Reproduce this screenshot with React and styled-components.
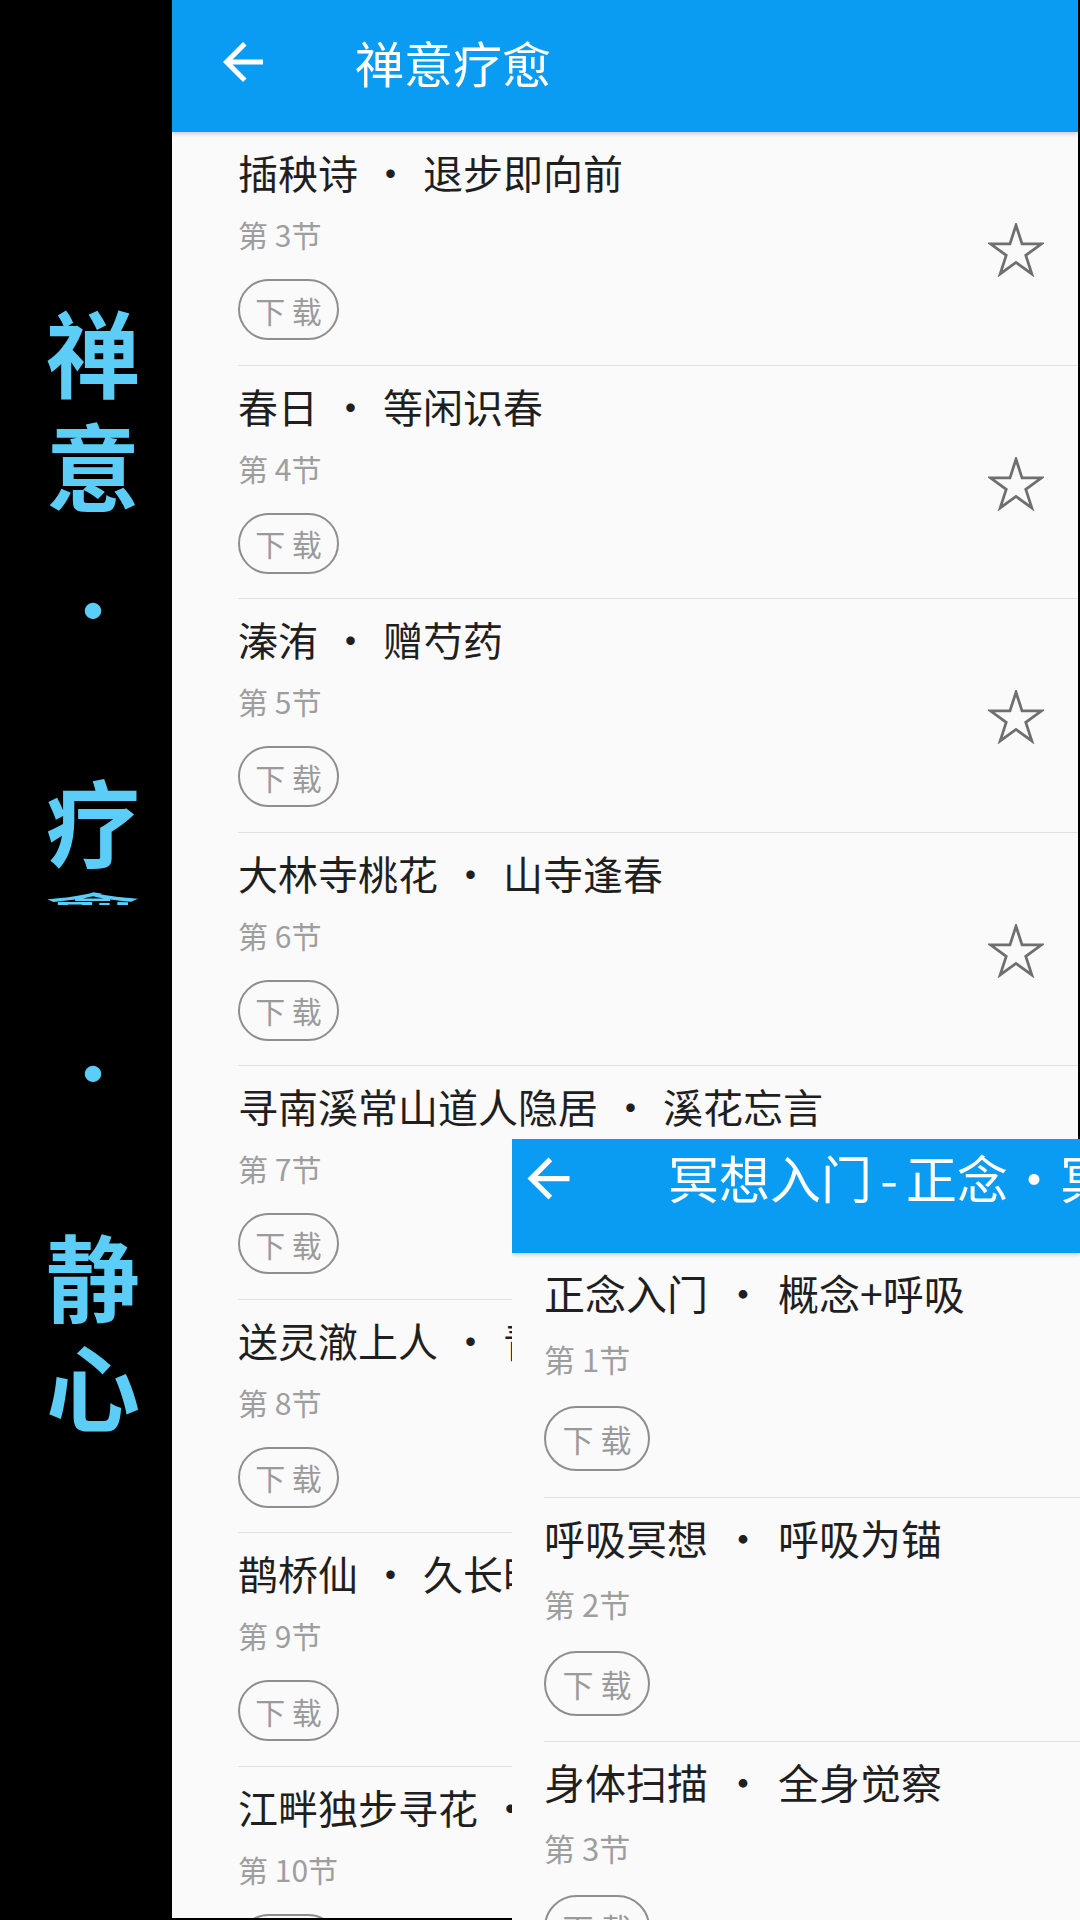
import React from 'react';
import styled, { createGlobalStyle } from 'styled-components';

const GlobalStyle = createGlobalStyle`
  html, body {
    margin: 0;
    padding: 0;
    background: #000;
  }
  body {
    font-family: 'Noto Sans CJK SC', 'Noto Sans', sans-serif;
  }
`;

const MAIN = {
  pad: 66,
  titleSize: 40,
  titleLH: 50,
  padTop: 15,
  subSize: 30,
  subLH: 40,
  subGap: 17,
  btnW: 101,
  btnH: 61,
  btnFont: 30,
  btnGap: 25,
  padBottom: 24.5,
  sep: 65,
};

const SIDE = {
  pad: 32,
  titleSize: 41,
  titleLH: 52,
  padTop: 13,
  subSize: 31,
  subLH: 42,
  subGap: 20,
  btnW: 106,
  btnH: 65,
  btnFont: 31,
  btnGap: 26,
  padBottom: 25.5,
  sep: 70,
};

const Screen = styled.div`
  position: relative;
  display: flex;
  width: 1080px;
  height: 1920px;
  background: #000;
  overflow: hidden;
`;

const Strip = styled.div`
  width: 172px;
  flex-shrink: 0;
  display: flex;
  flex-direction: column;
  align-items: center;
  padding: 292px 0 0 14px;
  box-sizing: border-box;
`;

const Glyph = styled.div`
  font-size: 94px;
  line-height: 116px;
  height: 116px;
  font-weight: 700;
  color: #5bcdf6;
  margin-top: ${(p) => p.$gap || 0}px;
`;

const Dot = styled.div`
  font-size: 64px;
  line-height: 116px;
  height: 116px;
  font-weight: 700;
  color: #5bcdf6;
  margin-top: ${(p) => p.$gap || 0}px;
`;

const Folding = styled.div`
  height: 13px;
  overflow: hidden;
  margin-top: 15px;
`;

const FoldingGlyph = styled.div`
  font-size: 94px;
  line-height: 94px;
  font-weight: 700;
  color: #5bcdf6;
  transform: scaleX(1.02) scaleY(0.34);
  transform-origin: top center;
  margin-top: -2px;
`;

const Panel = styled.div`
  width: 906px;
  height: 1918px;
  background: #fafafa;
  overflow: hidden;
  display: flex;
  flex-direction: column;
`;

const Overlay = styled.div`
  position: absolute;
  left: 512px;
  top: 1139px;
  right: 0;
  bottom: 0;
  background: #fafafa;
  overflow: hidden;
  display: flex;
  flex-direction: column;
`;

const Toolbar = styled.div`
  height: ${(p) => p.$h}px;
  flex-shrink: 0;
  background: #0a9cf3;
  display: flex;
  align-items: center;
  padding: 0 0 ${(p) => p.$pb}px ${(p) => p.$pl}px;
  box-sizing: border-box;
  box-shadow: 0 2px 4px rgba(0, 0, 0, 0.18);
  position: relative;
  z-index: 1;
  white-space: nowrap;
`;

const BackIcon = styled.svg`
  flex-shrink: 0;
  fill: #fff;
`;

const ToolbarTitle = styled.div`
  color: #fff;
  font-size: ${(p) => p.$size}px;
  font-weight: 400;
  margin-left: ${(p) => p.$ml}px;
  line-height: 1.2;
`;

const Spacer = styled.span`
  display: inline-block;
  width: ${(p) => p.$w}px;
  text-align: center;
`;

const List = styled.div`
  padding-left: ${(p) => p.$m.pad}px;
`;

const Row = styled.div`
  display: flex;
  align-items: center;
  border-bottom: 1px solid #e0e0e0;
`;

const Body = styled.div`
  flex: 1;
  display: flex;
  flex-direction: column;
  align-items: flex-start;
  padding: ${(p) => p.$m.padTop}px 0 ${(p) => p.$m.padBottom}px;
  white-space: nowrap;
`;

const Title = styled.div`
  font-size: ${(p) => p.$m.titleSize}px;
  line-height: ${(p) => p.$m.titleLH}px;
  color: #1f1f1f;
`;

const Sub = styled.div`
  font-size: ${(p) => p.$m.subSize}px;
  line-height: ${(p) => p.$m.subLH}px;
  margin-top: ${(p) => p.$m.subGap}px;
  color: #9e9e9e;
`;

const DownloadButton = styled.button`
  margin-top: ${(p) => p.$m.btnGap}px;
  width: ${(p) => p.$m.btnW}px;
  height: ${(p) => p.$m.btnH}px;
  border: 2px solid #8e8e8e;
  border-radius: ${(p) => p.$m.btnH / 2}px;
  background: transparent;
  color: #9a9a9a;
  font-family: inherit;
  font-size: ${(p) => p.$m.btnFont}px;
  padding: 0;
  display: flex;
  align-items: center;
  justify-content: center;
`;

const Star = styled.svg`
  flex-shrink: 0;
  margin: 4px 34px 0 0;
`;

const mainItems = [
  ['插秧诗', '退步即向前', 3],
  ['春日', '等闲识春', 4],
  ['溱洧', '赠芍药', 5],
  ['大林寺桃花', '山寺逢春', 6],
  ['寻南溪常山道人隐居', '溪花忘言', 7],
  ['送灵澈上人', '青山独归远', 8],
  ['鹊桥仙', '久长时', 9],
  ['江畔独步寻花', '春光懒困', 10],
];

const sideItems = [
  ['正念入门', '概念+呼吸', 1],
  ['呼吸冥想', '呼吸为锚', 2],
  ['身体扫描', '全身觉察', 3],
];

function Back({ size }) {
  return (
    <BackIcon width={size} height={size} viewBox='0 0 24 24'>
      <path d='M20 11H7.83l5.59-5.59L12 4l-8 8 8 8 1.41-1.41L7.83 13H20v-2z' />
    </BackIcon>
  );
}

function StarOutline() {
  return (
    <Star width='56' height='54' viewBox='0 0 52 50'>
      <polygon
        points='26,2 31.61,19.27 49.78,19.27 35.08,29.95 40.69,47.23 26,36.55 11.31,47.23 16.92,29.95 2.22,19.27 20.39,19.27'
        fill='none'
        stroke='#6f6f6f'
        strokeWidth='2.6'
        strokeLinejoin='miter'
      />
    </Star>
  );
}

function Lesson({ m, name, part, num, star }) {
  return (
    <Row>
      <Body $m={m}>
        <Title $m={m}>
          {name}
          <Spacer $w={m.sep}>·</Spacer>
          {part}
        </Title>
        <Sub $m={m}>第 {num}节</Sub>
        <DownloadButton $m={m}>下 载</DownloadButton>
      </Body>
      {star && <StarOutline />}
    </Row>
  );
}

export default function App() {
  return (
    <>
      <GlobalStyle />
      <Screen>
        <Strip>
          <Glyph>禅</Glyph>
          <Glyph $gap={-3}>意</Glyph>
          <Dot $gap={28}>·</Dot>
          <Glyph $gap={96}>疗</Glyph>
          <Folding>
            <FoldingGlyph>愈</FoldingGlyph>
          </Folding>
          <Dot $gap={107}>·</Dot>
          <Glyph $gap={88}>静</Glyph>
          <Glyph $gap={-6}>心</Glyph>
        </Strip>

        <Panel>
          <Toolbar $h={132} $pb={8} $pl={41}>
            <Back size={60} />
            <ToolbarTitle $size={49} $ml={82}>禅意疗愈</ToolbarTitle>
          </Toolbar>
          <List $m={MAIN}>
            {mainItems.map(([name, part, num]) => (
              <Lesson key={num} m={MAIN} name={name} part={part} num={num} star />
            ))}
          </List>
        </Panel>

        <Overlay>
          <Toolbar $h={114} $pb={36} $pl={5}>
            <Back size={63} />
            <ToolbarTitle $size={51} $ml={88}>
              冥想入门<Spacer $w={34}>-</Spacer>正念<Spacer $w={52}>·</Spacer>冥想
            </ToolbarTitle>
          </Toolbar>
          <List $m={SIDE}>
            {sideItems.map(([name, part, num]) => (
              <Lesson key={num} m={SIDE} name={name} part={part} num={num} />
            ))}
          </List>
        </Overlay>
      </Screen>
    </>
  );
}
